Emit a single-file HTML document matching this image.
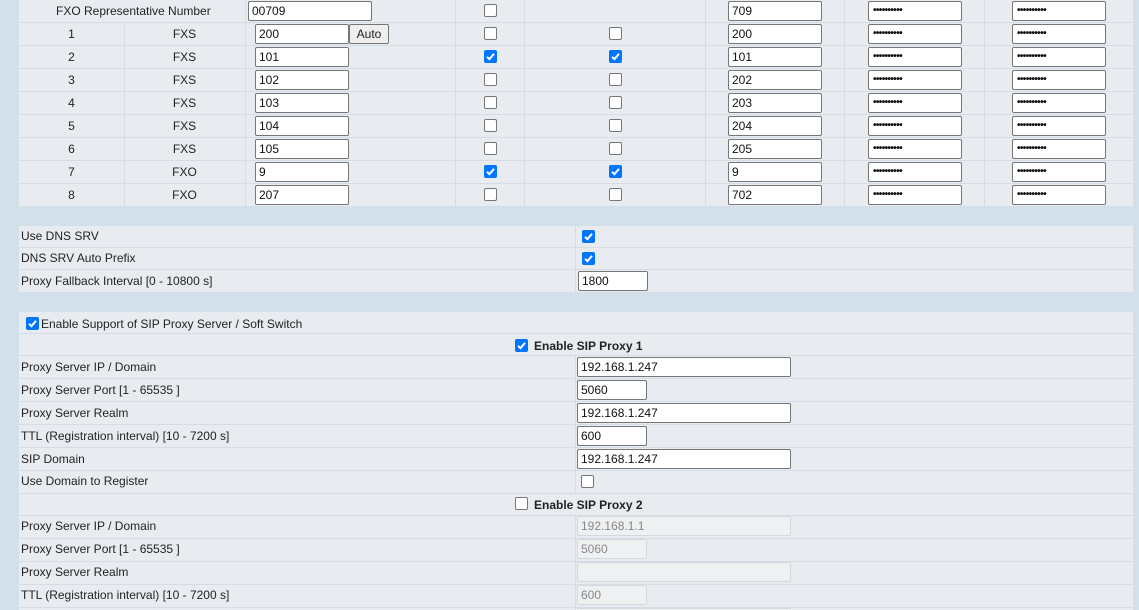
<!DOCTYPE html>
<html style="width:1139px;height:610px;overflow:hidden"><head><meta charset="utf-8"><style>
*{box-sizing:border-box;margin:0;padding:0}
body{width:1139px;height:610px;background:#d3e0e9;font-family:"Liberation Sans",Arial,sans-serif;font-size:12px;color:#222;position:relative;overflow:hidden}
.p{position:absolute;left:19px;width:1114px;background:#e8ecf1}
.l{position:absolute;left:19px;width:1114px;height:1px;background:#d4dde5}
.v{position:absolute;width:1px;background:#d4dde5}
.t{position:absolute;line-height:20px;white-space:nowrap}
.c{text-align:center}
.i{position:absolute;height:20px;background:#fff;border:1px solid #767676;border-radius:2px;padding-left:3px;line-height:18px;font-size:12px;color:#111;overflow:hidden}
.d{background:#eef0f2;border-color:#d6d9dc;color:#888}
.pw{font-size:10px;letter-spacing:-.6px;padding-left:4px;font-weight:bold}
.cb{position:absolute;width:13px;height:13px;border:1px solid #767676;border-radius:2px;background:#fff}
.ck{position:absolute;width:13px;height:13px;border-radius:2px;background:#0075ff}
.btn{position:absolute;height:20px;background:#efefef;border:1px solid #767676;border-radius:2px;text-align:center;line-height:18px;font-size:12px}
b{font-weight:bold}
</style></head><body>
<svg width="0" height="0" style="position:absolute"><defs><symbol id="chk" viewBox="0 0 13 13"><path d="M3 6.8 L5.4 9.2 L10 3.8" fill="none" stroke="#fff" stroke-width="2"/></symbol></defs></svg>

<div class="p" style="top:0;height:206px"></div>
<div class="l" style="top:22px"></div><div class="l" style="top:45px"></div><div class="l" style="top:68px"></div><div class="l" style="top:91px"></div><div class="l" style="top:114px"></div><div class="l" style="top:137px"></div><div class="l" style="top:160px"></div><div class="l" style="top:183px"></div>
<div class="v" style="left:124px;top:23px;height:183px"></div>
<div class="v" style="left:245px;top:0;height:206px"></div>
<div class="v" style="left:455px;top:0;height:206px"></div>
<div class="v" style="left:524px;top:0;height:206px"></div>
<div class="v" style="left:705px;top:0;height:206px"></div>
<div class="v" style="left:844px;top:0;height:206px"></div>
<div class="v" style="left:984px;top:0;height:206px"></div>

<div class="t" style="left:56px;top:1px">FXO Representative Number</div>
<div class="i" style="left:248px;top:1px;width:124px">00709</div>
<div class="cb" style="left:484px;top:4px"></div>
<div class="i" style="left:728px;top:1px;width:94px">709</div>
<div class="i pw" style="left:868px;top:1px;width:94px">••••••••••</div>
<div class="i pw" style="left:1012px;top:1px;width:94px">••••••••••</div>

<div class="t c" style="left:19px;width:105px;top:24px">1</div><div class="t c" style="left:124px;width:121px;top:24px">FXS</div>
<div class="i" style="left:255px;top:24px;width:94px">200</div><div class="btn" style="left:349px;top:24px;width:40px">Auto</div>
<div class="cb" style="left:484px;top:27px"></div><div class="cb" style="left:609px;top:27px"></div>
<div class="i" style="left:728px;top:24px;width:94px">200</div><div class="i pw" style="left:868px;top:24px;width:94px">••••••••••</div><div class="i pw" style="left:1012px;top:24px;width:94px">••••••••••</div>

<div class="t c" style="left:19px;width:105px;top:47px">2</div><div class="t c" style="left:124px;width:121px;top:47px">FXS</div>
<div class="i" style="left:255px;top:47px;width:94px">101</div>
<svg class="ck" style="left:484px;top:50px"><use href="#chk"/></svg><svg class="ck" style="left:609px;top:50px"><use href="#chk"/></svg>
<div class="i" style="left:728px;top:47px;width:94px">101</div><div class="i pw" style="left:868px;top:47px;width:94px">••••••••••</div><div class="i pw" style="left:1012px;top:47px;width:94px">••••••••••</div>

<div class="t c" style="left:19px;width:105px;top:70px">3</div><div class="t c" style="left:124px;width:121px;top:70px">FXS</div>
<div class="i" style="left:255px;top:70px;width:94px">102</div>
<div class="cb" style="left:484px;top:73px"></div><div class="cb" style="left:609px;top:73px"></div>
<div class="i" style="left:728px;top:70px;width:94px">202</div><div class="i pw" style="left:868px;top:70px;width:94px">••••••••••</div><div class="i pw" style="left:1012px;top:70px;width:94px">••••••••••</div>

<div class="t c" style="left:19px;width:105px;top:93px">4</div><div class="t c" style="left:124px;width:121px;top:93px">FXS</div>
<div class="i" style="left:255px;top:93px;width:94px">103</div>
<div class="cb" style="left:484px;top:96px"></div><div class="cb" style="left:609px;top:96px"></div>
<div class="i" style="left:728px;top:93px;width:94px">203</div><div class="i pw" style="left:868px;top:93px;width:94px">••••••••••</div><div class="i pw" style="left:1012px;top:93px;width:94px">••••••••••</div>

<div class="t c" style="left:19px;width:105px;top:116px">5</div><div class="t c" style="left:124px;width:121px;top:116px">FXS</div>
<div class="i" style="left:255px;top:116px;width:94px">104</div>
<div class="cb" style="left:484px;top:119px"></div><div class="cb" style="left:609px;top:119px"></div>
<div class="i" style="left:728px;top:116px;width:94px">204</div><div class="i pw" style="left:868px;top:116px;width:94px">••••••••••</div><div class="i pw" style="left:1012px;top:116px;width:94px">••••••••••</div>

<div class="t c" style="left:19px;width:105px;top:139px">6</div><div class="t c" style="left:124px;width:121px;top:139px">FXS</div>
<div class="i" style="left:255px;top:139px;width:94px">105</div>
<div class="cb" style="left:484px;top:142px"></div><div class="cb" style="left:609px;top:142px"></div>
<div class="i" style="left:728px;top:139px;width:94px">205</div><div class="i pw" style="left:868px;top:139px;width:94px">••••••••••</div><div class="i pw" style="left:1012px;top:139px;width:94px">••••••••••</div>

<div class="t c" style="left:19px;width:105px;top:162px">7</div><div class="t c" style="left:124px;width:121px;top:162px">FXO</div>
<div class="i" style="left:255px;top:162px;width:94px">9</div>
<svg class="ck" style="left:484px;top:165px"><use href="#chk"/></svg><svg class="ck" style="left:609px;top:165px"><use href="#chk"/></svg>
<div class="i" style="left:728px;top:162px;width:94px">9</div><div class="i pw" style="left:868px;top:162px;width:94px">••••••••••</div><div class="i pw" style="left:1012px;top:162px;width:94px">••••••••••</div>

<div class="t c" style="left:19px;width:105px;top:185px">8</div><div class="t c" style="left:124px;width:121px;top:185px">FXO</div>
<div class="i" style="left:255px;top:185px;width:94px">207</div>
<div class="cb" style="left:484px;top:188px"></div><div class="cb" style="left:609px;top:188px"></div>
<div class="i" style="left:728px;top:185px;width:94px">702</div><div class="i pw" style="left:868px;top:185px;width:94px">••••••••••</div><div class="i pw" style="left:1012px;top:185px;width:94px">••••••••••</div>

<div class="p" style="top:226px;height:66px"></div>
<div class="l" style="top:247px"></div><div class="l" style="top:269px"></div>
<div class="v" style="left:575px;top:226px;height:66px"></div>
<div class="t" style="left:21px;top:226px">Use DNS SRV</div>
<svg class="ck" style="left:582px;top:230px"><use href="#chk"/></svg>
<div class="t" style="left:21px;top:248px">DNS SRV Auto Prefix</div>
<svg class="ck" style="left:582px;top:252px"><use href="#chk"/></svg>
<div class="t" style="left:21px;top:271px">Proxy Fallback Interval [0 - 10800 s]</div>
<div class="i" style="left:578px;top:271px;width:70px">1800</div>

<div class="p" style="top:312px;height:298px"></div>
<div class="l" style="top:333px"></div><div class="l" style="top:355px"></div><div class="l" style="top:378px"></div><div class="l" style="top:401px"></div><div class="l" style="top:424px"></div><div class="l" style="top:447px"></div><div class="l" style="top:470px"></div><div class="l" style="top:493px"></div><div class="l" style="top:515px"></div><div class="l" style="top:538px"></div><div class="l" style="top:561px"></div><div class="l" style="top:584px"></div><div class="l" style="top:607px"></div>
<div class="v" style="left:575px;top:356px;height:138px"></div>
<div class="v" style="left:575px;top:516px;height:94px"></div>

<svg class="ck" style="left:26px;top:317px"><use href="#chk"/></svg>
<div class="t" style="left:41px;top:314px">Enable Support of SIP Proxy Server / Soft Switch</div>
<svg class="ck" style="left:515px;top:339px"><use href="#chk"/></svg>
<div class="t" style="left:534px;top:336px"><b>Enable SIP Proxy 1</b></div>

<div class="t" style="left:21px;top:357px">Proxy Server IP / Domain</div><div class="i" style="left:577px;top:357px;width:214px">192.168.1.247</div>
<div class="t" style="left:21px;top:380px">Proxy Server Port [1 - 65535 ]</div><div class="i" style="left:577px;top:380px;width:70px">5060</div>
<div class="t" style="left:21px;top:403px">Proxy Server Realm</div><div class="i" style="left:577px;top:403px;width:214px">192.168.1.247</div>
<div class="t" style="left:21px;top:426px">TTL (Registration interval) [10 - 7200 s]</div><div class="i" style="left:577px;top:426px;width:70px">600</div>
<div class="t" style="left:21px;top:449px">SIP Domain</div><div class="i" style="left:577px;top:449px;width:214px">192.168.1.247</div>
<div class="t" style="left:21px;top:471px">Use Domain to Register</div><div class="cb" style="left:581px;top:475px"></div>

<div class="cb" style="left:515px;top:497px"></div>
<div class="t" style="left:534px;top:495px"><b>Enable SIP Proxy 2</b></div>
<div class="t" style="left:21px;top:516px">Proxy Server IP / Domain</div><div class="i d" style="left:577px;top:516px;width:214px">192.168.1.1</div>
<div class="t" style="left:21px;top:539px">Proxy Server Port [1 - 65535 ]</div><div class="i d" style="left:577px;top:539px;width:70px">5060</div>
<div class="t" style="left:21px;top:562px">Proxy Server Realm</div><div class="i d" style="left:577px;top:562px;width:214px"></div>
<div class="t" style="left:21px;top:585px">TTL (Registration interval) [10 - 7200 s]</div><div class="i d" style="left:577px;top:585px;width:70px">600</div>
<div class="i d" style="left:577px;top:608px;width:214px;height:2px;border-bottom:none"></div>
</body></html>
